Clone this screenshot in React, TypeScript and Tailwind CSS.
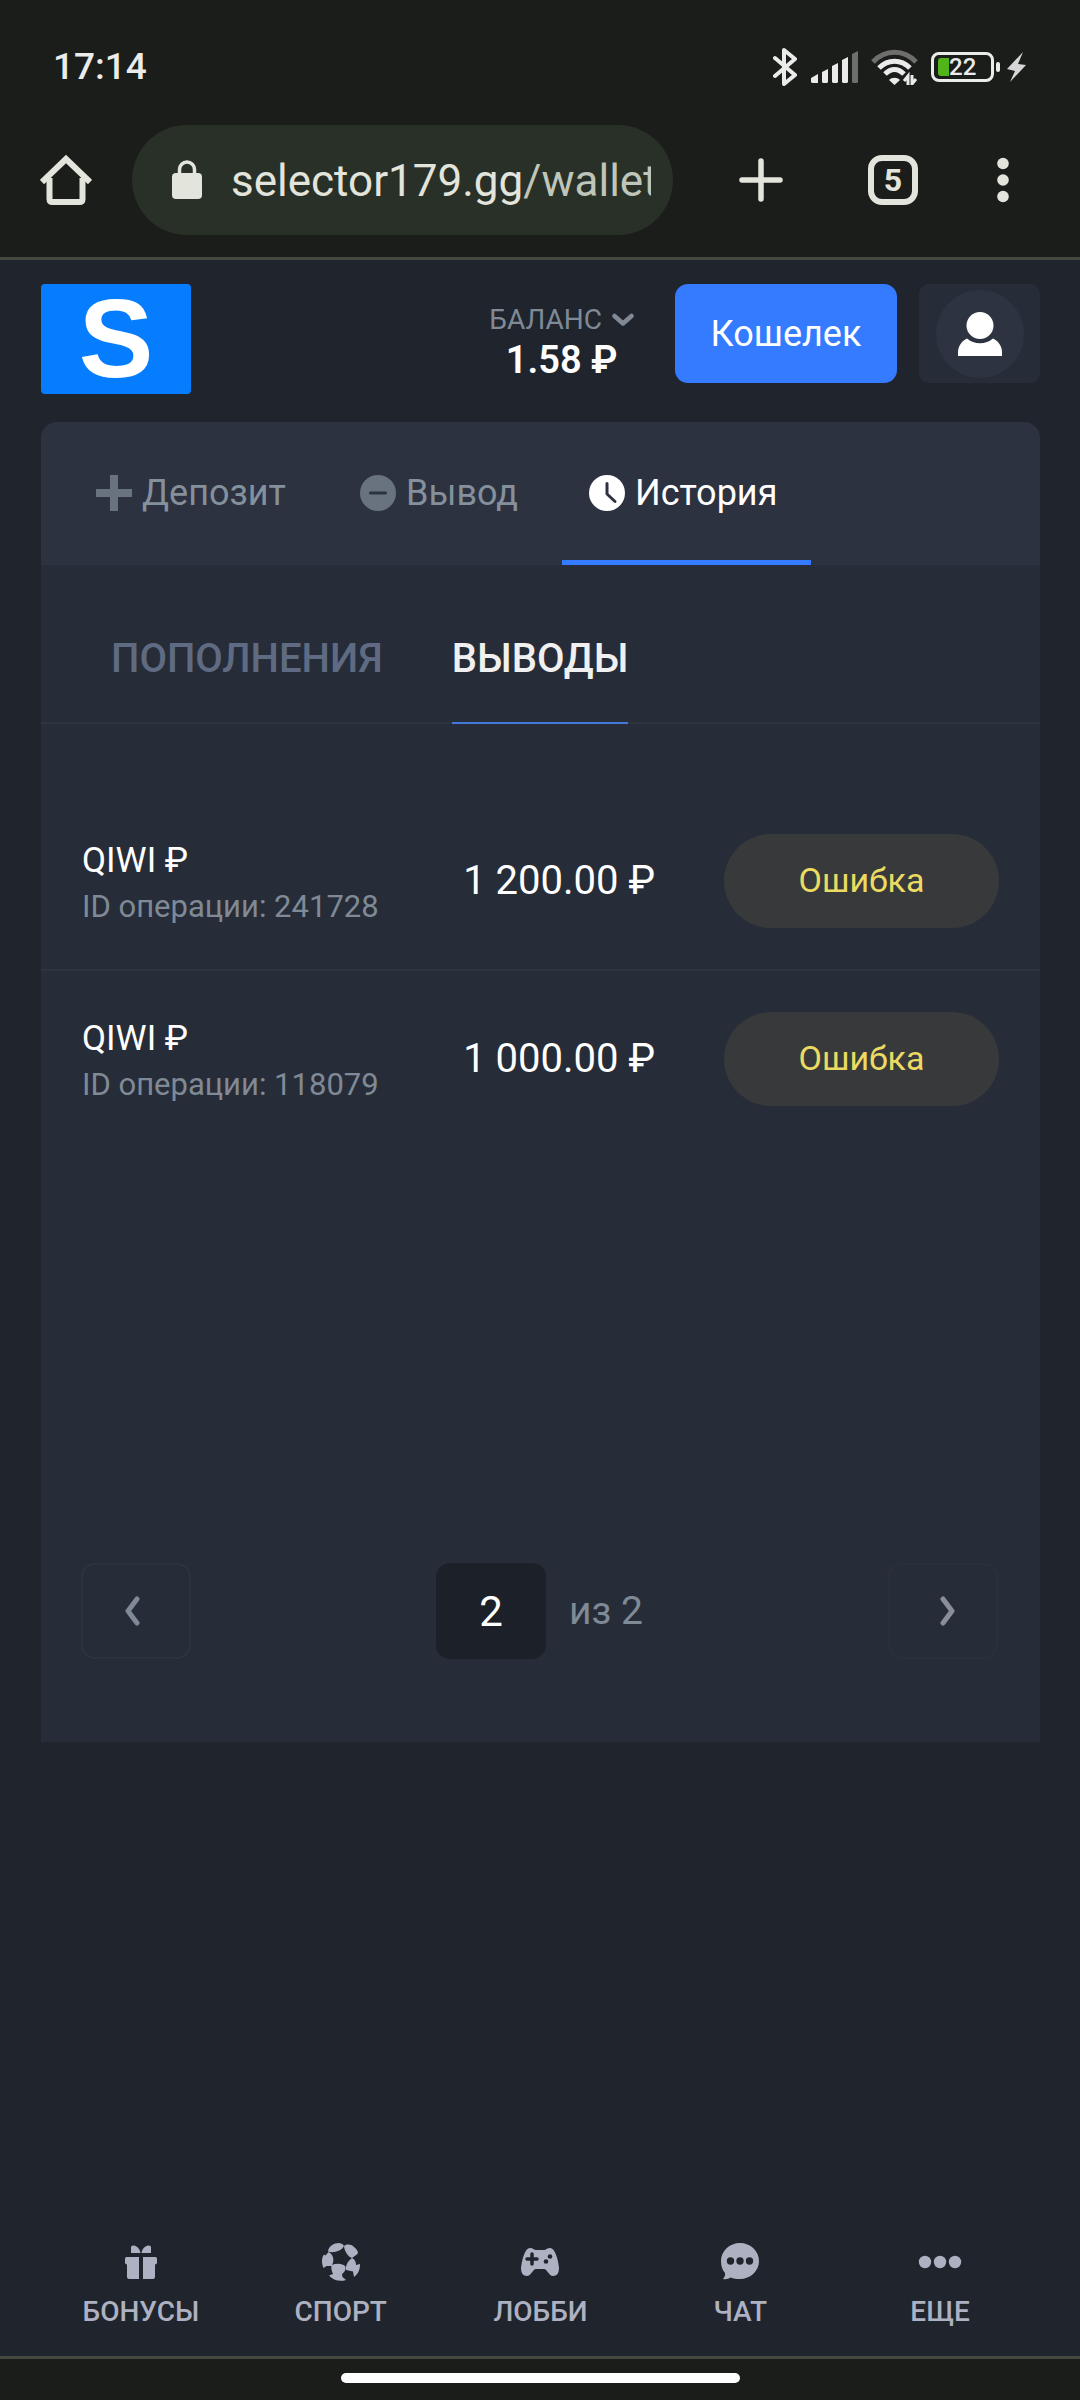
import React from 'react';

const transactions = [
    { id: '241728', method: 'QIWI ₽', amount: '1 200.00 ₽', status: 'Ошибка' },
    { id: '118079', method: 'QIWI ₽', amount: '1 000.00 ₽', status: 'Ошибка' },
];

const navItems = [
    { label: 'БОНУСЫ', icon: GiftIcon },
    { label: 'СПОРТ', icon: BallIcon },
    { label: 'ЛОББИ', icon: GamepadIcon },
    { label: 'ЧАТ', icon: ChatIcon },
    { label: 'ЕЩЕ', icon: MoreIcon },
];

export default function App() {
    return (
        <div className="min-h-screen flex flex-col bg-[#20242d] font-[Roboto,sans-serif] text-white">
            <StatusBar />
            <BrowserBar />
            <SiteHeader />
            <main className="pl-[41px] pr-10">
                <WalletCard />
            </main>
            <BottomNav />
            <div className="border-t-[3px] border-[#444940] bg-[#1b1d1a] h-11 pt-3.5">
                <div className="w-[399px] h-2.5 mx-auto rounded-full bg-white" />
            </div>
        </div>
    );
}

function StatusBar() {
    return (
        <div className="h-[125px] pt-[9px] pl-[53px] pr-[54px] flex items-center justify-between bg-[#1b1d1a] text-[#ebebeb]">
            <span className="text-[37px] font-medium">17:14</span>
            <div className="flex items-center">
                {/* Bluetooth */}
                <svg width="24" height="40" viewBox="0 0 24 40" fill="none" stroke="currentColor" strokeWidth="4" strokeLinecap="round" strokeLinejoin="round">
                    <path d="M2 11 22 28 11 37V3L22 12 2 29" />
                </svg>
                {/* Signal */}
                <svg className="ml-3.5" width="48" height="32" viewBox="0 0 48 32" fill="currentColor">
                    <path d="M0 27l7-4v9H1l-1-1zM11 21l6-3v13l-1 1h-4l-1-1zM21 15l6-3v19l-1 1h-4l-1-1zM31 9l6-3v25l-1 1h-4l-1-1z" />
                    <path d="M41 3l6-3v31l-1 1h-4l-1-1z" opacity="0.4" />
                </svg>
                {/* Wi-Fi */}
                <svg className="ml-3" width="48" height="36" viewBox="0 0 48 36" fill="none" stroke="currentColor" strokeWidth="5">
                    <path d="M2 13C14 0 33 0 45 13" opacity="0.4" />
                    <path d="M8 19C17 10 30 10 39 19" />
                    <path d="M14 25C20 19 27 19 33 25" />
                    <path d="M18 31c3-3 8-3 11 0l-5.500 5z" fill="currentColor" stroke="none" />
                    <path d="M37 36V27l-4 5M41 26v9l4-5" strokeWidth="3" />
                </svg>
                {/* Battery */}
                <div className="ml-3 w-[63px] h-[30px] border-3 border-[#ebebeb] rounded-[8px] flex items-center pl-1">
                    <span className="w-[11px] h-[18px] rounded-l-[3px] bg-[#51b51a]" />
                    <span className="text-[24px] leading-6 font-medium">22</span>
                </div>
                <span className="ml-0.5 w-1 h-2.5 rounded-sm bg-[#ebebeb]" />
                <svg className="ml-[7px]" width="19" height="30" viewBox="0 0 19 30" fill="#d6d6d6">
                    <path d="M16 0 0 17l8 2-5 11L19 13l-8-1z" />
                </svg>
            </div>
        </div>
    );
}

function BrowserBar() {
    return (
        <div className="pl-10 pr-[71px] pb-[22px] flex items-center bg-[#1b1d1a] border-b-[3px] border-[#444940] text-[#e3e4dc]">
            <button aria-label="Домой" className="mr-10">
                <svg width="52" height="52" viewBox="0 0 52 52" fill="none" stroke="currentColor" strokeWidth="6" strokeLinejoin="round">
                    <path d="M9.500 24V45q0 3 3 3h27q3 0 3-3V24" />
                    <path d="M2 28 26 5 50 28" strokeLinejoin="miter" />
                </svg>
            </button>
            <button className="flex-1 min-w-0 h-[110px] rounded-full bg-[#293027] pl-10 pr-[22px] flex items-center gap-[29px]">
                <svg className="shrink-0" width="30" height="40" viewBox="0 0 30 40">
                    <rect y="13" width="30" height="26" rx="4" fill="currentColor" />
                    <path d="M7.500 15V9.500a7.500 7.500 0 0 1 15 0V15" fill="none" stroke="currentColor" strokeWidth="3.500" />
                </svg>
                <span className="flex-1 pt-0.5 text-left text-[44px] whitespace-nowrap overflow-hidden">
                    selector179.gg<span className="text-[#bfc6b9]">/wallet</span>
                </span>
            </button>
            <button aria-label="Новая вкладка" className="ml-[66px]">
                <svg width="44" height="44" viewBox="0 0 44 44" stroke="currentColor" strokeWidth="5.500" strokeLinecap="round">
                    <path d="M22 3v38M3 22h38" />
                </svg>
            </button>
            <button className="ml-[85px] w-[50px] h-[50px] rounded-[14px] border-6 border-current text-[32px] leading-8 font-bold flex items-center justify-center">
                5
            </button>
            <button aria-label="Меню" className="ml-[79px]">
                <svg width="12" height="46" viewBox="0 0 12 46" fill="currentColor">
                    <circle cx="6" cy="6.500" r="5.800" />
                    <circle cx="6" cy="23" r="5.800" />
                    <circle cx="6" cy="39.500" r="5.800" />
                </svg>
            </button>
        </div>
    );
}

function SiteHeader() {
    return (
        <header className="pt-6 pb-7 pl-[41px] pr-10 flex items-start">
            <a href="#" className="w-[150px] h-[110px] rounded bg-[#067dff] flex items-center justify-center font-['Liberation_Sans',sans-serif] font-bold text-[112px] leading-none">
                S
            </a>
            <button className="ml-auto pt-4 flex flex-col items-center">
                <span className="flex items-center gap-2.5 text-[28px] leading-10 text-[#7f8a96]">
                    БАЛАНС
                    <svg width="22" height="14" viewBox="0 0 22 14" fill="none" stroke="currentColor" strokeWidth="4.500" strokeLinecap="round" strokeLinejoin="round">
                        <path d="M2.500 3 11 10.500 19.500 3" />
                    </svg>
                </span>
                <span className="text-[38px] leading-10 font-semibold">1.58 ₽</span>
            </button>
            <button className="ml-[41px] w-[222px] h-[99px] rounded-[13px] bg-[#347bff] text-[36px]">Кошелек</button>
            <button aria-label="Профиль" className="ml-[22px] w-[121px] h-[99px] rounded-[10px] bg-[#272d38] flex items-center justify-center">
                <span className="w-[88px] h-[88px] rounded-full bg-[#2d3340] flex items-center justify-center">
                    <svg width="44" height="44" viewBox="0 0 44 44" fill="currentColor">
                        <circle cx="22" cy="13.500" r="13.500" />
                        <path d="M9 26.500a20 20 0 0 0 26 0c6 3 9 8 9 14V44H0V40.500c0-6 3-11 9-14z" />
                    </svg>
                </span>
            </button>
        </header>
    );
}

function WalletCard() {
    return (
        <section className="bg-[#272d38] rounded-t-[16px] pb-[83px]">
            <div className="h-[143px] pl-7 flex gap-[17px] bg-[#2d3240] rounded-t-[16px] text-[36px] text-[#84909c]">
                <button className="w-[247px] pl-[27px] pb-0.5 flex items-center gap-2.5">
                    <svg width="36" height="36" viewBox="0 0 36 36" fill="#69727f">
                        <path d="M14 0h8v14h14v8H22v14h-8V22H0v-8h14z" />
                    </svg>
                    Депозит
                </button>
                <button className="w-[212px] pl-[27px] pb-0.5 flex items-center gap-2.5">
                    <svg width="36" height="36" viewBox="0 0 36 36">
                        <circle cx="18" cy="18" r="18" fill="#69727f" />
                        <path d="M10.500 18h15" stroke="#2d3240" strokeWidth="3" strokeLinecap="round" />
                    </svg>
                    Вывод
                </button>
                <button className="w-[249px] pl-[27px] pt-[3px] flex items-center gap-2.5 border-b-5 border-[#347bff] text-white">
                    <svg width="36" height="36" viewBox="0 0 36 36">
                        <circle cx="18" cy="18" r="18" fill="currentColor" />
                        <path d="M18 8.500V19l8 7.500" fill="none" stroke="#2d3240" strokeWidth="3" strokeLinecap="round" strokeLinejoin="round" />
                    </svg>
                    История
                </button>
            </div>

            <div className="h-[159px] pl-[70px] flex gap-[69px] border-b-2 border-[#2d333f] text-[40px] font-medium">
                <button className="pt-[30px] text-[#5f6b82]">ПОПОЛНЕНИЯ</button>
                <button className="pt-[30px] -mb-0.5 border-b-2 border-[#4478d8] text-[#f0f0f0]">ВЫВОДЫ</button>
            </div>

            <div className="mt-[69px] min-h-[770px]">
                <table className="w-full border-separate border-spacing-0">
                    <tbody>
                        {transactions.map((item, idx) => (
                            <tr key={item.id} className={idx === 0 ? 'border-[#2d333f]' : 'border-transparent'}>
                                <td className="h-[178px] pl-[41px] pt-1.5 border-b-2 border-inherit">
                                    <p className="text-[35px] leading-[46px]">{item.method}</p>
                                    <p className="text-[31px] leading-[46px] text-[#7f8a96]">ID операции: {item.id}</p>
                                </td>
                                <td className="border-b-2 border-inherit text-right text-[40px]">{item.amount}</td>
                                <td className="w-[385px] pl-[69px] pr-[41px] border-b-2 border-inherit">
                                    <span className="h-[94px] pb-0.5 rounded-full bg-[#38393b] text-[#ecdb62] text-[34px] flex items-center justify-center">
                                        {item.status}
                                    </span>
                                </td>
                            </tr>
                        ))}
                    </tbody>
                </table>
            </div>

            <div className="pl-10 pr-[42px] flex items-center justify-between">
                <button aria-label="Назад" className="w-[110px] h-24 pr-2 rounded-[14px] border-2 border-[#2c323e] text-[#7f8a96] flex items-center justify-center">
                    <Chevron d="M13 3 4 15l9 12" />
                </button>
                <div className="flex items-center gap-[23px]">
                    <input type="text" defaultValue="2" aria-label="Страница" className="w-[110px] h-24 rounded-[14px] bg-[#1c2028] text-center text-[42px]" />
                    <span className="text-[39px] text-[#7f8a96]">из 2</span>
                </div>
                <button aria-label="Вперед" className="w-[110px] h-24 pl-2 rounded-[14px] border-2 border-[#2a2f3c] text-[#8a8e99] flex items-center justify-center">
                    <Chevron d="M4 3l9 12-9 12" />
                </button>
            </div>
        </section>
    );
}

function Chevron({ d }: { d: string }) {
    return (
        <svg width="17" height="30" viewBox="0 0 17 30" fill="none" stroke="currentColor" strokeWidth="5" strokeLinecap="round" strokeLinejoin="round">
            <path d={d} />
        </svg>
    );
}

function BottomNav() {
    return (
        <nav className="mt-auto pl-[41px] pr-10 pb-[26px] grid grid-cols-5">
            {navItems.map(({ label, icon: Icon }) => (
                <a key={label} href="#" className="flex flex-col items-center gap-3 text-[#adb1c1] text-[28px] leading-9 font-medium">
                    <Icon />
                    {label}
                </a>
            ))}
        </nav>
    );
}

function GiftIcon() {
    return (
        <svg width="40" height="40" viewBox="0 0 40 40" fill="currentColor">
            <path d="M19.500 11h-9.500V5.500C10 2 18 3 19.500 11zM20.500 11H30V5.500C30 2 22 3 20.500 11z" />
            <path d="M5.500 15H18v22H8q-2 0-2-2V22.500q-2 0-2-2V17q0-2 1.500-2zM22 15h12.500Q36 15 36 17v3.500q0 2-2 2V35q0 2-2 2H22z" />
        </svg>
    );
}

function BallIcon() {
    return (
        <svg width="40" height="40" viewBox="0 0 40 40" fill="currentColor">
            <path d="M7 9.500C7.500 4 13 1 18 1q4 .5 5 3C21 8.500 13 11.500 7 9.500z" />
            <path d="M23 4c3-2 7-2 10 1q3 2 4 5l-.5 2-5.500 4C26.500 14.500 23.500 9 23 4z" />
            <path d="M7.500 10c5 2.500 6.500 9 3 14H5.500l-3 2C0 20 1 15 3 12.500l1.500 1z" />
            <path d="M31 16c3 1.500 4 4 4 7l4-1c0 6-2 10-6 13l-1-5.500-7-1.500c-.5-5 2-9 6-12z" />
            <path d="M10.500 23c5-2 11-2 14 1.500c.5 4-1.500 6-3.500 7.500l.5 3L25 38c-6 2-13 .5-17-4.500l4-1.500c-1.500-3-2-6-1.500-9z" />
        </svg>
    );
}

function GamepadIcon() {
    return (
        <svg width="40" height="40" viewBox="0 0 40 40" fill="currentColor">
            <path d="M10 6c3 0 4 2 6 2h8c2 0 3-2 6-2c5 0 8 11 9 20c0 5-2 8-6 8c-4 0-6-7-9-7h-8c-3 0-5 7-9 7c-4 0-6-3-6-8C2 17 5 6 10 6z" />
            <path d="M12 12v10M7 17h10" stroke="#20242d" strokeWidth="3.500" strokeLinecap="round" />
            <circle cx="30" cy="14.500" r="2.300" fill="#20242d" />
            <circle cx="26" cy="19.500" r="2.300" fill="#20242d" />
        </svg>
    );
}

function ChatIcon() {
    return (
        <svg width="40" height="40" viewBox="0 0 40 40" fill="currentColor">
            <path d="M20 1C9.500 1 1 9 1 19c0 5.500 1.500 9 4 12 .5 2.500-.5 4-2 6 3 .5 5.500 0 7.500-1.500 3 1 6 1.500 9.500 1.500 10.500 0 19-8 19-18S30.500 1 20 1z" />
            <circle cx="10.500" cy="19" r="3.700" fill="#20242d" />
            <circle cx="20" cy="19" r="3.700" fill="#20242d" />
            <circle cx="29.500" cy="19" r="3.700" fill="#20242d" />
        </svg>
    );
}

function MoreIcon() {
    return (
        <svg width="44" height="40" viewBox="0 0 44 40" fill="currentColor">
            <circle cx="7" cy="20" r="6.200" />
            <circle cx="22" cy="20" r="6.200" />
            <circle cx="37" cy="20" r="6.200" />
        </svg>
    );
}
